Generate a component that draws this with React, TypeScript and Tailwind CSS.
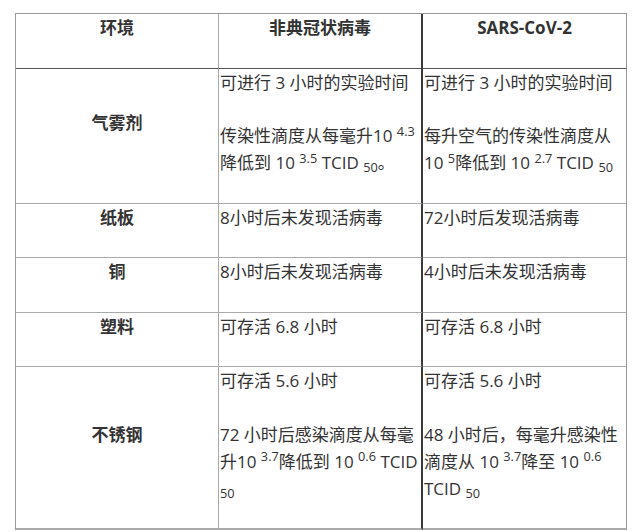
const th = "border-r border-b border-b-[#555] px-0 align-top font-bold text-center";
const leftCell = "border-r border-r-[#aaa] border-b border-b-[#aaa] align-middle text-center font-bold";
const midCell = "border-r-2 border-r-[#3a3a3a] border-b border-b-[#aaa] align-top text-left pl-px";
const rightCell = "border-r border-r-[#999] border-b border-b-[#aaa] align-top text-left pl-px";

function P({ children }: { children: React.ReactNode }) {
  return <p className="mb-[26.5px]">{children}</p>;
}

export default function App() {
  return (
    <div className="min-h-[532px] bg-white pt-[13px] pl-[15px]">
      <table
        className="w-[612px] table-fixed border-separate border-spacing-0 border-t border-l border-[#999] text-[17px] leading-[27px] text-[#333] font-['Open_Sans','Noto_Sans_CJK_SC',sans-serif]"
      >
        <colgroup>
          <col className="w-[203px]" />
          <col className="w-[204px]" />
          <col />
        </colgroup>
        <thead>
          <tr>
            <th className={th + " border-r-[#aaa]"}>
              <P>环境</P>
            </th>
            <th className={th + " border-r-2 border-r-[#3a3a3a]"}>
              <P>非典冠状病毒</P>
            </th>
            <th className={th + " border-r-[#999]"}>
              <P>SARS-CoV-2</P>
            </th>
          </tr>
        </thead>
        <tbody>
          <tr>
            <td className={leftCell}>
              <P>气雾剂</P>
            </td>
            <td className={midCell}>
              <P>可进行 3 小时的实验时间</P>
              <P>
                传染性滴度从每毫升10 <sup>4.3</sup> 降低到 10 <sup>3.5</sup> TCID <sub>50</sub>。
              </P>
            </td>
            <td className={rightCell}>
              <P>可进行 3 小时的实验时间</P>
              <P>
                每升空气的传染性滴度从 10 <sup>5</sup>降低到 10 <sup>2.7</sup> TCID <sub>50</sub>
              </P>
            </td>
          </tr>
          <tr>
            <td className={leftCell}>
              <P>纸板</P>
            </td>
            <td className={midCell}>
              <P>8小时后未发现活病毒</P>
            </td>
            <td className={rightCell}>
              <P>72小时后发现活病毒</P>
            </td>
          </tr>
          <tr>
            <td className={leftCell}>
              <P>铜</P>
            </td>
            <td className={midCell}>
              <P>8小时后未发现活病毒</P>
            </td>
            <td className={rightCell}>
              <P>4小时后未发现活病毒</P>
            </td>
          </tr>
          <tr>
            <td className={leftCell}>
              <P>塑料</P>
            </td>
            <td className={midCell}>
              <P>可存活 6.8 小时</P>
            </td>
            <td className={rightCell}>
              <P>可存活 6.8 小时</P>
            </td>
          </tr>
          <tr>
            <td className={leftCell + " border-b-2 border-b-[#444]"}>
              <P>不锈钢</P>
            </td>
            <td className={midCell + " border-b-2 border-b-[#444]"}>
              <P>可存活 5.6 小时</P>
              <P>
                72 小时后感染滴度从每毫升10 <sup>3.7</sup>降低到 10 <sup>0.6</sup> TCID <sub>50</sub>
              </P>
            </td>
            <td className={rightCell + " border-b-2 border-b-[#444]"}>
              <P>可存活 5.6 小时</P>
              <P>
                48 小时后，每毫升感染性滴度从 10 <sup>3.7</sup>降至 10 <sup>0.6</sup> TCID <sub>50</sub>
              </P>
            </td>
          </tr>
        </tbody>
      </table>
    </div>
  );
}
